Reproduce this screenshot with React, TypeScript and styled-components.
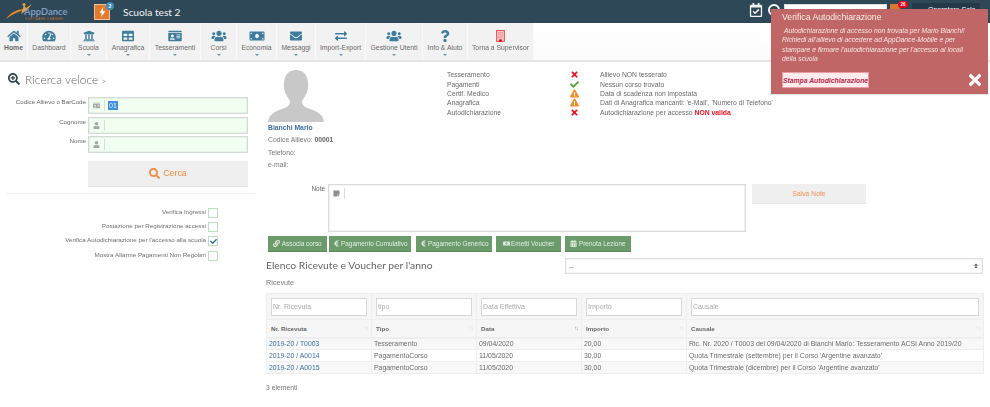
import { Fragment } from "react";
import styled, { createGlobalStyle } from "styled-components";
import {
    FaCalendarAlt,
    FaCheck,
    FaEnvelope,
    FaEuroSign,
    FaExchangeAlt,
    FaExclamationTriangle,
    FaHome,
    FaIdCard,
    FaLink,
    FaMoneyBill,
    FaMoneyBillAlt,
    FaQuestion,
    FaRegCalendarCheck,
    FaSearch,
    FaSearchPlus,
    FaSort,
    FaStickyNote,
    FaTable,
    FaTachometerAlt,
    FaTimes,
    FaUniversity,
    FaUser,
    FaUsers,
} from "react-icons/fa";

const GlobalStyle = createGlobalStyle`
    html, body {
        margin: 0;
        padding: 0;
        background: #fff;
        font-family: "Liberation Sans", Arial, sans-serif;
        color: #777;
        overflow: hidden;
    }
    * { box-sizing: border-box; }
`;

const Page = styled.div`
    position: relative;
    width: 990px;
    height: 407px;
    overflow: hidden;
    filter: blur(0.3px);
`;

const TopBar = styled.header`
    height: 23px;
    background: #2f4858;
    display: flex;
    align-items: center;
    padding-left: 5px;
`;

const Logo = styled.div`
    position: relative;
    width: 66px;
    height: 23px;
    flex: none;
`;

const LogoMark = styled.svg`
    position: absolute;
    left: 0;
    top: 2px;
`;

const LogoName = styled.span`
    position: absolute;
    left: 19px;
    top: 7px;
    font-family: "Lato", sans-serif;
    font-weight: 700;
    font-size: 9.4px;
    line-height: 10px;
    color: #7f9cc4;
`;

const LogoSub = styled.span`
    position: absolute;
    left: 20px;
    top: 17px;
    font-size: 3px;
    line-height: 4px;
    letter-spacing: 0.45px;
    color: #c9702c;
    white-space: nowrap;
`;

const Bolt = styled.div`
    position: relative;
    margin-left: 23px;
    width: 16px;
    height: 16px;
    background: #e07b30;
    border: 1px solid #f0c29c;
    display: flex;
    align-items: center;
    justify-content: center;
    flex: none;
`;

const BoltBadge = styled.span`
    position: absolute;
    top: -3px;
    right: -5px;
    width: 8px;
    height: 8px;
    border-radius: 50%;
    background: #3c8dbc;
    color: #fff;
    font-size: 5px;
    font-weight: 700;
    line-height: 8px;
    text-align: center;
`;

const SchoolName = styled.div`
    margin-left: 13px;
    font-family: "Lato", sans-serif;
    font-size: 10.2px;
    color: #f2f2f2;
`;

const TopRight = styled.div`
    margin-left: auto;
    display: flex;
    align-items: center;
    padding-right: 10px;
    > svg { margin-top: -3px; }
`;

const TopSearch = styled.div`
    width: 12px;
    height: 12px;
    border: 2px solid #fff;
    border-radius: 50%;
    margin: -3px 4px 0 5px;
`;

const TopInput = styled.div`
    width: 103px;
    height: 12px;
    margin-top: -3px;
    background: #fff;
    border: 1px solid #ddd;
`;

const Mail = styled.div`
    position: relative;
    width: 10px;
    height: 10px;
    margin: -5px 0 0 3px;
    background: #d9782e;
`;

const MailBadge = styled.span`
    position: absolute;
    top: -3px;
    left: 8px;
    width: 10px;
    height: 7px;
    border-radius: 4px;
    background: #e8001c;
    color: #fff;
    font-size: 4.5px;
    font-weight: 700;
    line-height: 7px;
    text-align: center;
`;

const UserBox = styled.div`
    width: 68px;
    height: 14px;
    margin: -3px 0 0 12px;
    background: #26394a;
    color: #fff;
    font-size: 7px;
    line-height: 13px;
    padding-left: 16px;
    white-space: nowrap;
    overflow: hidden;
`;

const MenuBar = styled.nav`
    height: 39px;
    display: flex;
    background: linear-gradient(#fff, #fbfbfb);
    border-bottom: 2px solid #e4e4e4;
`;

const MenuItem = styled.a<{ $w: number }>`
    width: ${(p) => p.$w}px;
    flex: none;
    height: 37px;
    background: #f2f2f2;
    border-right: 1px solid #fafafa;
    display: flex;
    flex-direction: column;
    align-items: center;
    padding-top: 7px;
    color: #3f7d9c;
    svg { height: 12px; }
`;

const MenuLabel = styled.span<{ $strong?: boolean }>`
    margin-top: 1px;
    font-size: 6.8px;
    line-height: 9px;
    white-space: nowrap;
    color: #6a6a6a;
    font-weight: ${(p) => (p.$strong ? 700 : 400)};
`;

const Caret = styled.span`
    margin-top: 2px;
    width: 0;
    height: 0;
    border-left: 2px solid transparent;
    border-right: 2px solid transparent;
    border-top: 2px solid #6f94a8;
`;

const Main = styled.main`
    display: grid;
    grid-template-columns: 266px 717px;
`;

const Side = styled.section`
    padding: 9px 6px 0 6px;
`;

const SearchTitle = styled.h2`
    margin: 0 0 10px 2px;
    height: 16px;
    display: flex;
    align-items: center;
    gap: 5px;
    font-family: "Lato", sans-serif;
    font-weight: 300;
    font-size: 12px;
    color: #666;
    svg { color: #33434f; width: 12px; height: 12px; }
    small { font-size: 8px; }
`;

const FieldRow = styled.div`
    display: grid;
    grid-template-columns: 82px 160px;
    align-items: start;
    margin-bottom: 2.5px;
`;

const FieldLabel = styled.label`
    text-align: right;
    padding-right: 2px;
    font-size: 6.2px;
    line-height: 9px;
    white-space: nowrap;
    color: #666;
`;

const InputBox = styled.div`
    height: 17px;
    background: #f0fff0;
    border: 1px solid #d3dcd3;
    box-shadow: inset 0 0 0 0.5px #dfe5df;
    display: flex;
    align-items: center;
    font-size: 7px;
    color: #666;
`;

const Addon = styled.span`
    width: 16px;
    height: 11px;
    flex: none;
    border-right: 1px solid #dcdcdc;
    display: flex;
    align-items: center;
    justify-content: center;
    color: #a5a5a5;
    svg { width: 7px; height: 7px; }
`;

const Selected = styled.span`
    margin-left: 3px;
    background: #3d8fe0;
    color: #e8f2ff;
    padding: 0 1px;
    line-height: 9px;
`;

const SearchButton = styled.button`
    display: flex;
    align-items: center;
    justify-content: center;
    gap: 3px;
    margin: 7.5px 0 6px 82px;
    width: 160px;
    height: 26px;
    background: #efefef;
    border: 0;
    border-bottom: 1px solid #e4e4e4;
    font-family: "Liberation Sans", sans-serif;
    font-size: 8.8px;
    color: #f08a3c;
    svg { width: 11px; height: 11px; }
`;

const Divider = styled.div`
    height: 1px;
    margin-right: 3px;
    background: #f1f1f1;
`;

const Checks = styled.div`
    margin-top: 14px;
    width: 212px;
    display: grid;
    row-gap: 4.4px;
`;

const CheckRow = styled.div`
    display: flex;
    align-items: flex-start;
    justify-content: flex-end;
    gap: 2px;
    height: 10px;
    font-size: 6.25px;
    line-height: 7px;
    color: #6e6e6e;
    white-space: nowrap;
`;

const CheckBox = styled.span`
    width: 10px;
    height: 10px;
    flex: none;
    background: #fff;
    border: 1px solid #bfe0bf;
    display: flex;
    align-items: center;
    justify-content: center;
    color: #2f6da8;
    svg { width: 7px; height: 7px; }
`;

const Content = styled.section`
    min-width: 0;
`;

const TopBlock = styled.div`
    display: grid;
    grid-template-columns: 181px 1fr;
    height: 122px;
`;

const Profile = styled.div`
    padding: 8px 0 0 2px;
    font-size: 6.8px;
    color: #777;
    svg { display: block; }
`;

const ProfileLine = styled.div`
    height: 12.4px;
    line-height: 12px;
    white-space: nowrap;
    b { font-weight: 700; color: #666; }
`;

const StudentName = styled(ProfileLine)`
    font-weight: 700;
    color: #3f6fa3;
`;

const StatusGrid = styled.div`
    padding-top: 8px;
    display: grid;
    grid-template-columns: 121px 32px 1fr;
    grid-auto-rows: 9.35px;
    align-items: center;
    font-size: 6.8px;
    line-height: 9px;
    white-space: nowrap;
    color: #6b6b6b;
`;

const StatusIcon = styled.span<{ $color: string }>`
    display: flex;
    padding-left: 2px;
    color: ${(p) => p.$color};
    svg { width: 9px; height: 9px; }
`;

const Alert = styled.b`
    color: #f01020;
`;

const NoteRow = styled.div`
    display: flex;
    align-items: flex-start;
`;

const NoteLabel = styled.label`
    width: 59px;
    text-align: right;
    font-size: 6.4px;
    line-height: 9px;
    color: #666;
`;

const NoteBox = styled.div`
    margin-left: 3px;
    width: 418px;
    height: 48px;
    border: 1px solid #dcdcdc;
    display: flex;
    align-items: flex-start;
    padding-top: 3px;
    box-shadow: inset 0 0 0 0.5px #e8e8e8;
`;

const NoteAddon = styled(Addon)`
    color: #8f8f8f;
`;

const SaveButton = styled.button`
    margin-left: 6px;
    width: 114px;
    height: 20px;
    background: #efefef;
    border: 0;
    border-bottom: 1px solid #e5e5e5;
    font-family: "Liberation Sans", sans-serif;
    font-size: 6.8px;
    color: #f0955a;
`;

const Actions = styled.div`
    display: flex;
    margin: 4px 0 0 2px;
`;

const ActionButton = styled.button<{ $w: number; $gap: number }>`
    width: ${(p) => p.$w}px;
    margin-right: ${(p) => p.$gap}px;
    height: 16px;
    padding: 0;
    background: #6b9b6b;
    border: 0;
    border-bottom: 1px solid #5c8a5c;
    color: #e4efe4;
    font-family: "Liberation Sans", sans-serif;
    font-size: 6.4px;
    display: flex;
    align-items: center;
    justify-content: center;
    gap: 1.5px;
    white-space: nowrap;
    svg { width: 7px; height: 7px; flex: none; }
`;

const YearRow = styled.div`
    margin-top: 5px;
    height: 16px;
    display: flex;
    align-items: center;
`;

const YearTitle = styled.h3`
    margin: 0;
    width: 299px;
    font-family: "Lato", sans-serif;
    font-weight: 400;
    font-size: 10.3px;
    white-space: nowrap;
    color: #666;
`;

const YearSelect = styled.div`
    width: 418px;
    height: 16px;
    margin-top: 2px;
    border: 1px solid #e0e0e0;
    box-shadow: inset 0 0 0 0.5px #ececec;
    display: flex;
    align-items: center;
    justify-content: space-between;
    padding: 0 3px;
    font-size: 7px;
    color: #777;
    svg { width: 6px; height: 6px; color: #555; }
`;

const SubTitle = styled.div`
    margin-top: 5px;
    height: 15px;
    font-size: 7.2px;
    line-height: 10px;
    color: #777;
`;

const Table = styled.table`
    width: 717px;
    table-layout: fixed;
    border-collapse: collapse;
    font-size: 6.9px;
    color: #6b6b6b;
`;

const FilterCell = styled.th`
    height: 25px;
    padding: 3.5px 4px;
    background: #f6f6f6;
    border: 1px solid #eee;
    font-weight: 400;
`;

const FilterInput = styled.div`
    height: 18px;
    padding-left: 1px;
    background: #fff;
    border: 1px solid #d8d8d8;
    text-align: left;
    line-height: 16px;
    font-size: 7px;
    color: #aaa;
`;

const HeadCell = styled.th`
    position: relative;
    height: 18px;
    padding: 0 4px;
    background: #f6f6f6;
    border: 1px solid #eee;
    border-bottom-width: 2px;
    text-align: left;
    font-size: 6.2px;
    font-weight: 700;
    color: #666;
`;

const SortMark = styled.span<{ $active?: boolean }>`
    position: absolute;
    top: 5px;
    right: 3px;
    font-size: 6px;
    font-weight: 400;
    letter-spacing: -1px;
    color: ${(p) => (p.$active ? "#999" : "#ddd")};
`;

const BodyRow = styled.tr<{ $odd: boolean }>`
    background: ${(p) => (p.$odd ? "#f8f8f8" : "#fff")};
`;

const BodyCell = styled.td`
    height: 12px;
    padding: 0 2px;
    border: 1px solid #eee;
    line-height: 10px;
    white-space: nowrap;
    overflow: hidden;
    a { color: #3f6fa3; }
`;

const TableFoot = styled.div`
    margin-top: 9px;
    font-size: 6.8px;
    line-height: 10px;
    color: #777;
`;

const Toast = styled.aside`
    position: absolute;
    left: 771px;
    top: 9px;
    width: 217px;
    height: 85px;
    padding: 2px 11px;
    background: #c06666;
    color: #f7e6e6;
    box-shadow: 0 1px 1px rgba(0, 0, 0, 0.1);
`;

const ToastTitle = styled.div`
    font-size: 8.7px;
    line-height: 12px;
    color: #f9eded;
`;

const ToastBody = styled.p`
    margin: 3px 0 0;
    font-size: 6.8px;
    line-height: 9.4px;
    font-style: italic;
    text-indent: 2px;
`;

const ToastButton = styled.button`
    position: absolute;
    left: 11px;
    bottom: 6px;
    height: 16px;
    width: 87px;
    padding: 0;
    background: #fdecec;
    border: 1px solid #ef9aa8;
    font-family: "Liberation Sans", sans-serif;
    font-size: 6.8px;
    font-weight: 700;
    font-style: italic;
    white-space: nowrap;
    color: #b8244c;
`;

const ToastClose = styled.span`
    position: absolute;
    right: 4px;
    bottom: 5px;
    color: #fff;
    display: flex;
    svg { width: 18px; height: 18px; }
`;

const menu = [
    { label: "Home", w: 28, icon: <FaHome />, strong: true },
    { label: "Dashboard", w: 43, icon: <FaTachometerAlt /> },
    { label: "Scuola", w: 36, icon: <FaUniversity />, caret: true },
    { label: "Anagrafica", w: 43, icon: <FaTable />, caret: true },
    { label: "Tesseramenti", w: 51, icon: <FaIdCard />, caret: true },
    { label: "Corsi", w: 36, icon: <FaUsers />, caret: true },
    { label: "Economia", w: 40, icon: <FaMoneyBill />, caret: true },
    { label: "Messaggi", w: 39, icon: <FaEnvelope />, caret: true },
    { label: "Import-Export", w: 50, icon: <FaExchangeAlt />, caret: true },
    { label: "Gestione Utenti", w: 57, icon: <FaUsers />, caret: true },
    { label: "Info & Aiuto", w: 45, icon: <FaQuestion />, caret: true },
    {
        label: "Torna a Supervisor",
        w: 66,
        icon: (
            <svg viewBox="0 0 10 14" width="9" height="12">
                <rect x="0.5" y="0.5" width="9" height="13" fill="#f8c4c4" stroke="#e84040" />
                <path d="M2 3h6M2 5h6M2 7h6M2 9h6" stroke="#ee8a8a" strokeWidth="0.8" />
                <rect x="3.5" y="11" width="3" height="2.5" fill="#d80000" />
            </svg>
        ),
    },
];

const status = [
    { name: "Tesseramento", kind: "no", text: "Allievo NON tesserato" },
    { name: "Pagamenti", kind: "ok", text: "Nessun corso trovato" },
    { name: "Certif. Medico", kind: "warn", text: "Data di scadenza non impostata" },
    { name: "Anagrafica", kind: "warn", text: "Dati di Anagrafica mancanti: 'e-Mail', 'Numero di Telefono'" },
];

const statusIcon = (kind: string) => {
    if (kind === "ok") return <StatusIcon $color="#5a9e3c"><FaCheck /></StatusIcon>;
    if (kind === "warn") return <StatusIcon $color="#f08a24"><FaExclamationTriangle /></StatusIcon>;
    return <StatusIcon $color="#ee1020"><FaTimes /></StatusIcon>;
};

const checks = [
    { label: "Verifica Ingressi", on: false },
    { label: "Postazione per Registrazione accessi", on: false },
    { label: "Verifica Autodichiarazione per l'accesso alla scuola", on: true },
    { label: "Mostra Allarme Pagamenti Non Regolari", on: false },
];

const columns = [
    { head: "Nr. Ricevuta", filter: "Nr. Ricevuta", w: 105 },
    { head: "Tipo", filter: "tipo", w: 105 },
    { head: "Data", filter: "Data Effettiva", w: 105, active: true },
    { head: "Importo", filter: "Importo", w: 105 },
    { head: "Causale", filter: "Causale", w: 297 },
];

const rows = [
    ["2019-20 / T0003", "Tesseramento", "09/04/2020", "20,00", "Ric. Nr. 2020 / T0003 del 09/04/2020 di Bianchi Mario: Tesseramento ACSI Anno 2019/20"],
    ["2019-20 / A0014", "PagamentoCorso", "11/05/2020", "30,00", "Quota Trimestrale (settembre) per il Corso 'Argentine avanzato'"],
    ["2019-20 / A0015", "PagamentoCorso", "11/05/2020", "30,00", "Quota Trimestrale (dicembre) per il Corso 'Argentine avanzato'"],
];

function App() {
    return (
        <Page>
            <GlobalStyle />
            <TopBar>
                <Logo>
                    <LogoMark viewBox="0 0 30 20" width="30" height="20">
                        <path d="M1 17C6 10 12 7 22 7C14 9 8 12 1 17Z" fill="#e8892c" />
                        <path d="M16 12L19 3L21 6L27 2L22 8L19 10Z" fill="#e8a23c" />
                        <circle cx="19" cy="2.5" r="1.5" fill="#e8a23c" />
                    </LogoMark>
                    <LogoName>AppDance</LogoName>
                    <LogoSub>SOFTWARE CHANNEL</LogoSub>
                </Logo>
                <Bolt>
                    <svg viewBox="0 0 10 14" width="7" height="10">
                        <path d="M6 0L1 8h3l-1 6 6-8H5.5z" fill="#fff" />
                    </svg>
                    <BoltBadge>2</BoltBadge>
                </Bolt>
                <SchoolName>Scuola test 2</SchoolName>
                <TopRight>
                    <FaRegCalendarCheck color="#f4f4f4" size={14} />
                    <TopSearch />
                    <TopInput />
                    <Mail>
                        <MailBadge>26</MailBadge>
                    </Mail>
                    <UserBox>Operatore Sala</UserBox>
                </TopRight>
            </TopBar>
            <MenuBar>
                {menu.map((item) => (
                    <MenuItem key={item.label} $w={item.w}>
                        {item.icon}
                        <MenuLabel $strong={item.strong}>{item.label}</MenuLabel>
                        {item.caret && <Caret />}
                    </MenuItem>
                ))}
            </MenuBar>
            <Main>
                <Side>
                    <SearchTitle>
                        <FaSearchPlus />
                        <span>
                            Ricerca veloce <small>&gt;</small>
                        </span>
                    </SearchTitle>
                    <FieldRow>
                        <FieldLabel>Codice Allievo o BarCode</FieldLabel>
                        <InputBox>
                            <Addon><FaIdCard /></Addon>
                            <Selected>01</Selected>
                        </InputBox>
                    </FieldRow>
                    <FieldRow>
                        <FieldLabel>Cognome</FieldLabel>
                        <InputBox>
                            <Addon><FaUser /></Addon>
                        </InputBox>
                    </FieldRow>
                    <FieldRow>
                        <FieldLabel>Nome</FieldLabel>
                        <InputBox>
                            <Addon><FaUser /></Addon>
                        </InputBox>
                    </FieldRow>
                    <SearchButton>
                        <FaSearch />
                        Cerca
                    </SearchButton>
                    <Divider />
                    <Checks>
                        {checks.map((c) => (
                            <CheckRow key={c.label}>
                                {c.label}
                                <CheckBox>{c.on && <FaCheck />}</CheckBox>
                            </CheckRow>
                        ))}
                    </Checks>
                </Side>
                <Content>
                    <TopBlock>
                        <Profile>
                            <svg viewBox="0 0 56 52" width="56" height="52">
                                <path
                                    d="M28 0C18 0 15 9 16 18C17 24 20 28 22 31C22 35 20 37 14 39C6 42 1 44 0 52H56C55 44 50 42 42 39C36 37 34 35 34 31C36 28 39 24 40 18C41 9 38 0 28 0Z"
                                    fill="#c8c8c8"
                                />
                            </svg>
                            <StudentName>Bianchi Mario</StudentName>
                            <ProfileLine>
                                Codice Allievo: <b>00001</b>
                            </ProfileLine>
                            <ProfileLine>Telefono:</ProfileLine>
                            <ProfileLine>e-mail:</ProfileLine>
                        </Profile>
                        <StatusGrid>
                            {status.map((s) => (
                                <Fragment key={s.name}>
                                    <span>{s.name}</span>
                                    {statusIcon(s.kind)}
                                    <span>{s.text}</span>
                                </Fragment>
                            ))}
                            <span>Autodichiarazione</span>
                            {statusIcon("no")}
                            <span>
                                Autodichiarazione per accesso <Alert>NON valida</Alert>
                            </span>
                        </StatusGrid>
                    </TopBlock>
                    <NoteRow>
                        <NoteLabel>Note</NoteLabel>
                        <NoteBox>
                            <NoteAddon><FaStickyNote /></NoteAddon>
                        </NoteBox>
                        <SaveButton>Salva Note</SaveButton>
                    </NoteRow>
                    <Actions>
                        <ActionButton $w={59} $gap={2}><FaLink />Associa corso</ActionButton>
                        <ActionButton $w={82} $gap={5}><FaEuroSign />Pagamento Cumulativo</ActionButton>
                        <ActionButton $w={76} $gap={4}><FaEuroSign />Pagamento Generico</ActionButton>
                        <ActionButton $w={65} $gap={4}><FaMoneyBillAlt />Emetti Voucher</ActionButton>
                        <ActionButton $w={66} $gap={0}><FaCalendarAlt />Prenota Lezione</ActionButton>
                    </Actions>
                    <YearRow>
                        <YearTitle>Elenco Ricevute e Voucher per l'anno</YearTitle>
                        <YearSelect>
                            <span>--</span>
                            <FaSort />
                        </YearSelect>
                    </YearRow>
                    <SubTitle>Ricevute</SubTitle>
                    <Table>
                        <colgroup>
                            {columns.map((c) => (
                                <col key={c.head} width={c.w} />
                            ))}
                        </colgroup>
                        <thead>
                            <tr>
                                {columns.map((c) => (
                                    <FilterCell key={c.head}>
                                        <FilterInput>{c.filter}</FilterInput>
                                    </FilterCell>
                                ))}
                            </tr>
                            <tr>
                                {columns.map((c) => (
                                    <HeadCell key={c.head}>
                                        {c.head}
                                        <SortMark $active={c.active}>↑↓</SortMark>
                                    </HeadCell>
                                ))}
                            </tr>
                        </thead>
                        <tbody>
                            {rows.map((r, i) => (
                                <BodyRow key={r[0]} $odd={i % 2 === 0}>
                                    <BodyCell><a>{r[0]}</a></BodyCell>
                                    {r.slice(1).map((cell, j) => (
                                        <BodyCell key={j}>{cell}</BodyCell>
                                    ))}
                                </BodyRow>
                            ))}
                        </tbody>
                    </Table>
                    <TableFoot>3 elementi</TableFoot>
                </Content>
            </Main>
            <Toast>
                <ToastTitle>Verifica Autodichiarazione</ToastTitle>
                <ToastBody>
                    Autodichiarazione di accesso non trovata per Mario Bianchi! Richiedi all'allievo di accedere ad
                    AppDance-Mobile e per stampare e firmare l'autodichiarazione per l'accesso ai locali della scuola
                </ToastBody>
                <ToastButton>Stampa Autodichiarazione</ToastButton>
                <ToastClose><FaTimes /></ToastClose>
            </Toast>
        </Page>
    );
}

export default App;
